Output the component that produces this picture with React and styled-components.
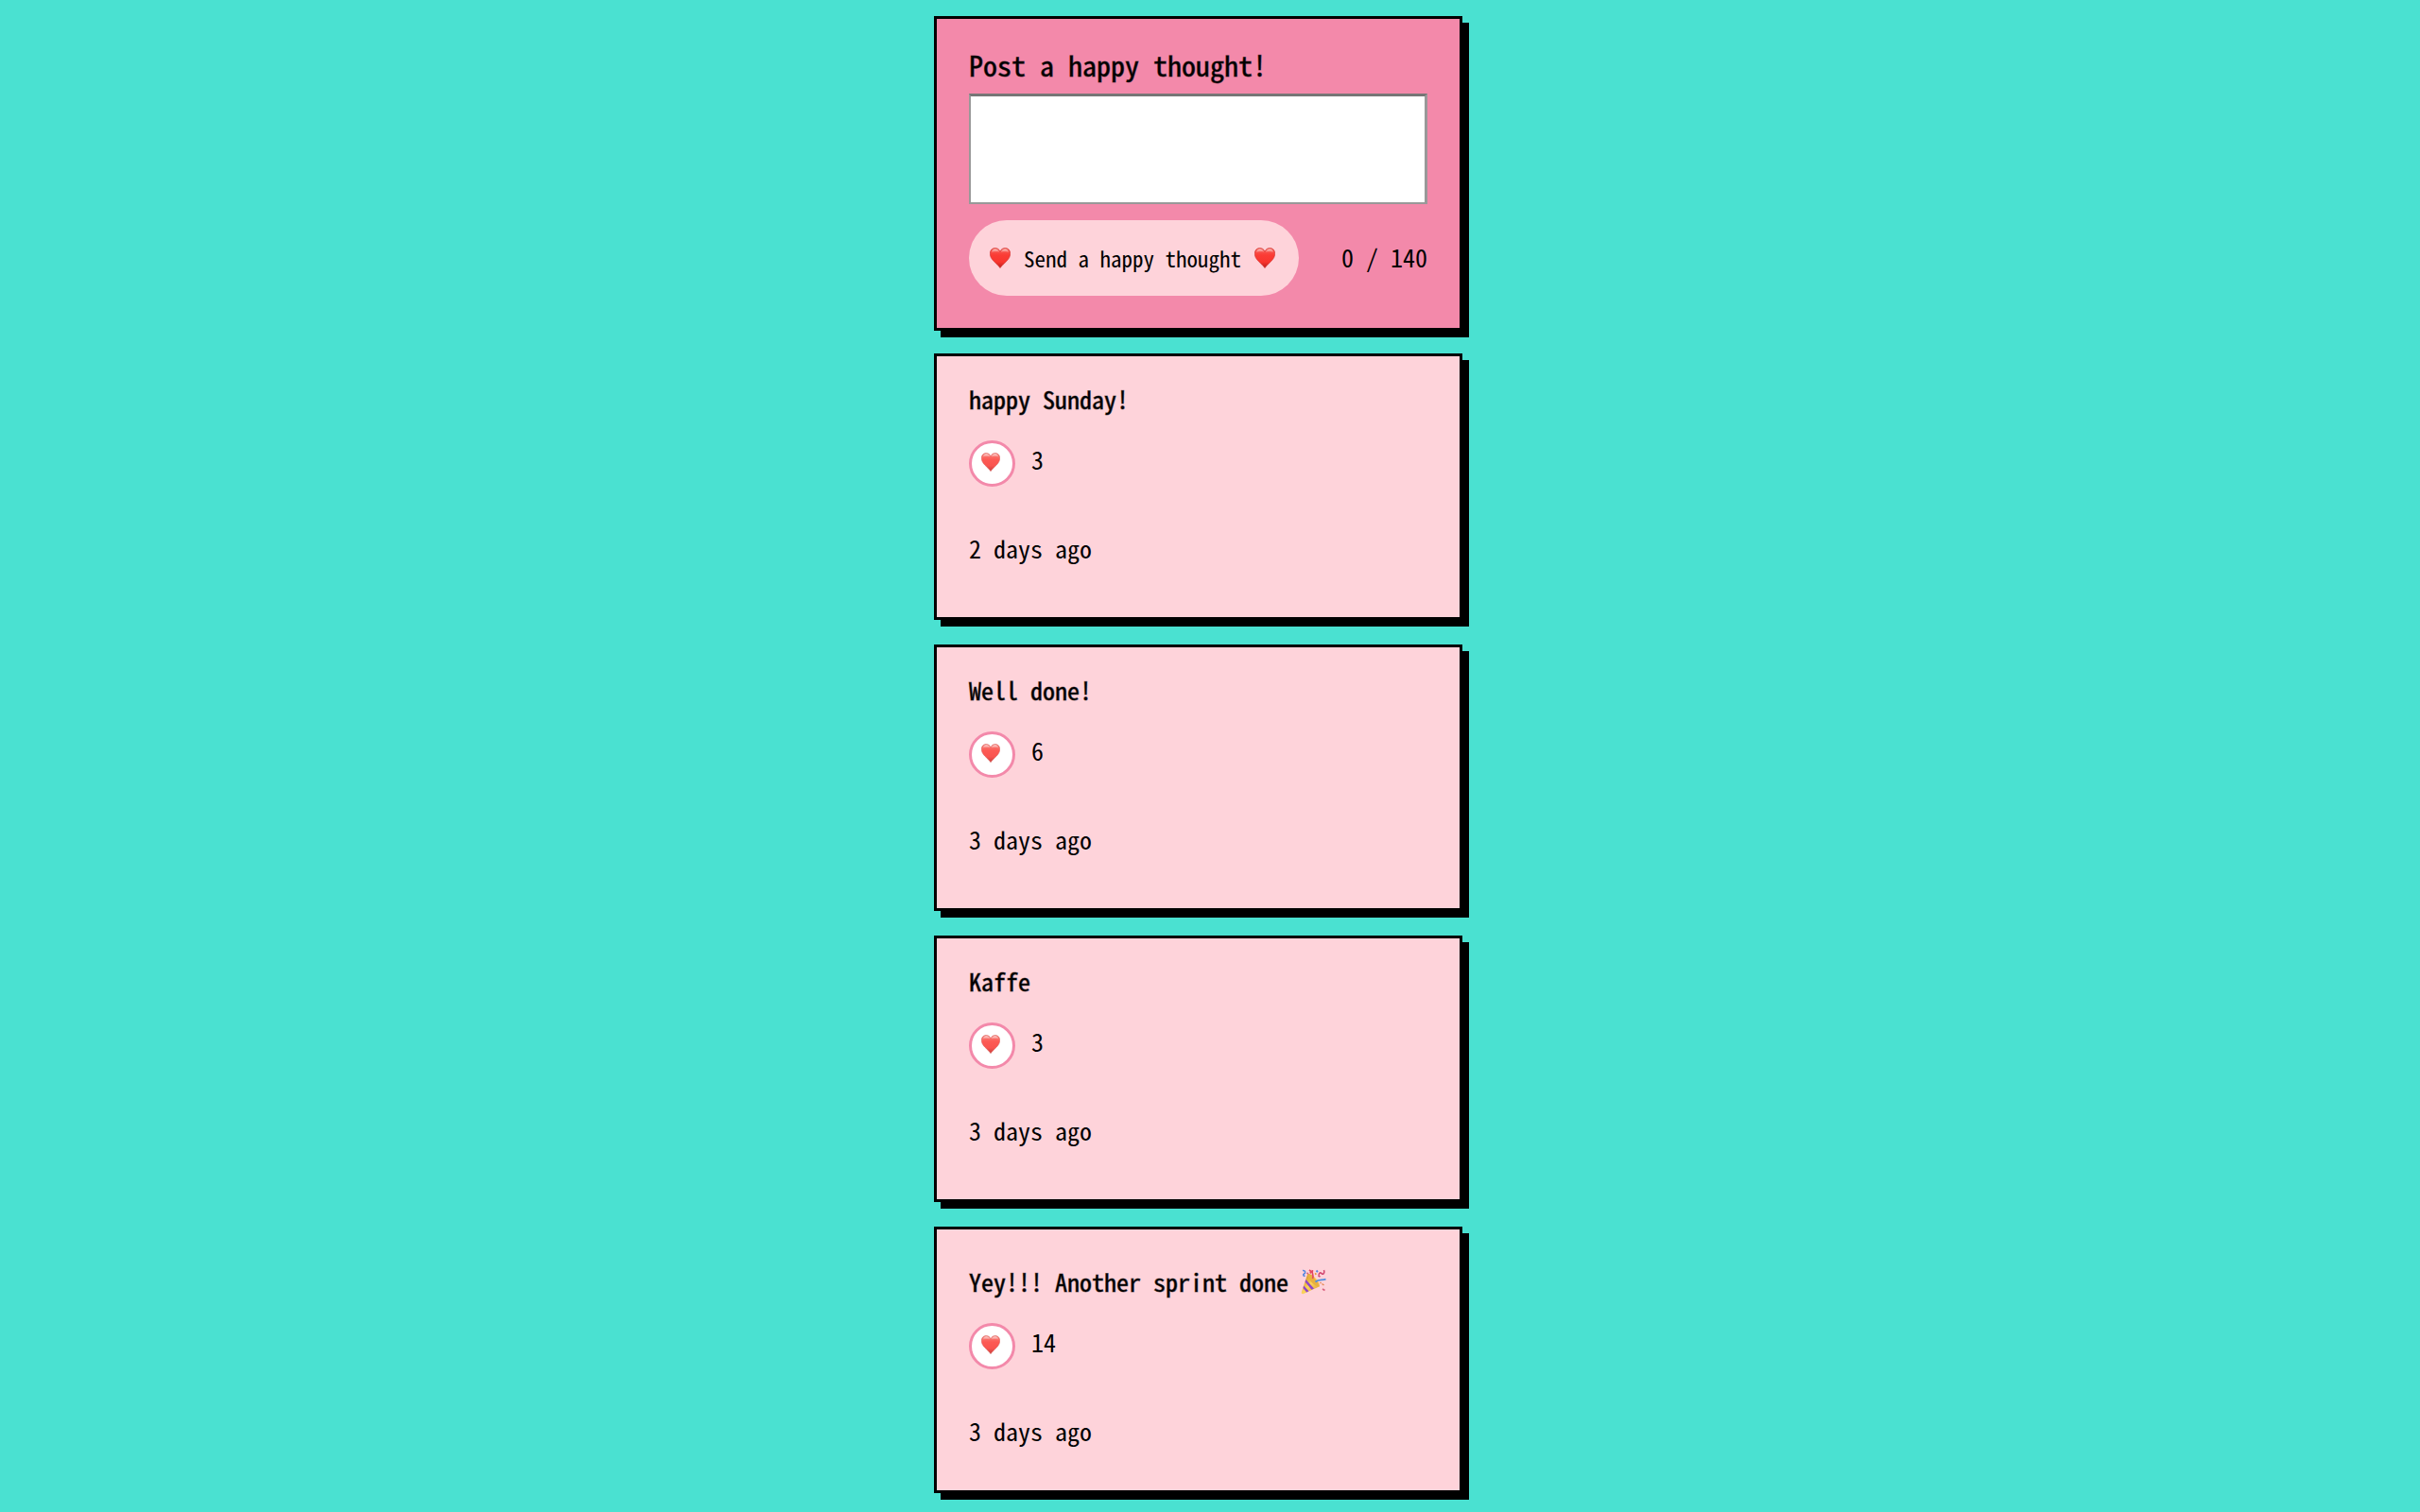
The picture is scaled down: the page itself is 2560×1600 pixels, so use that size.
import React, { useId, useState } from "react";
import styled, { createGlobalStyle } from "styled-components";

const MAX_LENGTH = 140;

const GlobalStyle = createGlobalStyle`
  *, *::before, *::after { box-sizing: border-box; }
  body {
    margin: 0;
    background: #4ae1d1;
    color: #000;
    font-family: "Noto Sans Mono CJK JP", "DejaVu Sans Mono", monospace;
    font-size: 26px;
    line-height: 22px;
  }
`;

const Shell = styled.div`
  display: flex;
  justify-content: center;
  padding-right: 25px;
`;

const Page = styled.main`
  width: 100%;
  max-width: 559px;
  padding: 17px 0 14px;
`;

const Card = styled.div`
  border: 3px solid #000;
  box-shadow: 7px 7px 0 #000;
  padding: 34px;
`;

const ThoughtForm = styled(Card)`
  display: flex;
  flex-direction: column;
  margin-bottom: 24px;
  background: #f389aa;
`;

const FormTitle = styled.label`
  padding-bottom: 17px;
  font-size: 30px;
  line-height: 28px;
  -webkit-text-stroke: 1px rgba(0, 0, 0, 0.5);
`;

const MessageBox = styled.textarea`
  height: 117px;
  margin: 0 0 17px;
  padding: 8px;
  border: solid #999;
  border-width: 3px 3px 2px 2px;
  border-top-color: #767676;
  border-radius: 0;
  background: #fff;
  font: inherit;
  line-height: 32px;
  resize: none;
  outline: none;
`;

const FormFooter = styled.div`
  display: flex;
  align-items: center;
  justify-content: space-between;
`;

const SendButton = styled.button`
  display: flex;
  align-items: center;
  gap: 14px;
  height: 80px;
  padding: 0 25px 0 22px;
  border: 0;
  border-radius: 40px;
  background: #fed3da;
  color: #000;
  font-family: inherit;
  font-size: 23px;
  cursor: pointer;
`;

const Counter = styled.span`
  padding-bottom: 3px;
  white-space: nowrap;
`;

const ThoughtList = styled.div`
  display: flex;
  flex-direction: column;
  gap: 26px;
`;

const ThoughtCard = styled(Card).attrs({ as: "article" })`
  min-height: 282px;
  background: #fed3da;
`;

const Message = styled.h2`
  margin: 0 0 33px;
  font-size: 26px;
  font-weight: 400;
  -webkit-text-stroke: 1px rgba(0, 0, 0, 0.5);
`;

const Likes = styled.div`
  display: flex;
  align-items: center;
  gap: 17px;
`;

const LikeButton = styled.button`
  display: grid;
  place-items: center;
  width: 49px;
  height: 49px;
  padding: 0 3px 3px 0;
  border: 3px solid #f389aa;
  border-radius: 50%;
  background: #fff;
  cursor: pointer;
`;

const LikeCount = styled.span`
  padding-bottom: 10px;
`;

const PostedAt = styled.p`
  margin: 54px 0 0;
`;

const PopperIcon = styled.svg`
  width: 27px;
  height: 27px;
  margin: 8px 0 -4px;
  vertical-align: 1px;
`;

function Heart({ size = 22, soft = false }) {
  const id = useId();
  return (
    <svg width={size} height={size} viewBox="0 0 22 22" aria-hidden="true">
      <defs>
        <linearGradient id={id + "f"} x1="0" y1="0" x2="0" y2="1">
          <stop offset="0" stopColor={soft ? "#f5837c" : "#f4655d"} />
          <stop offset="0.35" stopColor={soft ? "#fd5a54" : "#fb3c35"} />
          <stop offset="0.7" stopColor={soft ? "#f9544f" : "#f8352e"} />
          <stop offset="1" stopColor={soft ? "#c93f3c" : "#b81f1d"} />
        </linearGradient>
        <linearGradient id={id + "g"} x1="0" y1="0" x2="0" y2="1">
          <stop offset="0" stopColor="#fff" stopOpacity="0.65" />
          <stop offset="1" stopColor="#fff" stopOpacity="0" />
        </linearGradient>
      </defs>
      <path
        d="M11 21.600C9.600 19.500 7 17.200 4.300 14.500C1.700 11.900 0.300 9.300 0.300 6.300C0.300 2.900 2.500 0.500 5.700 0.500C8.100 0.500 10 1.800 11 4.100C12 1.800 13.900 0.500 16.300 0.500C19.500 0.500 21.700 2.900 21.700 6.300C21.700 9.300 20.300 11.900 17.700 14.500C15 17.200 12.400 19.500 11 21.600Z"
        fill={`url(#${id}f)`}
        stroke={soft ? "#d9615d" : "#cf2f2b"}
        strokeWidth="0.6"
      />
      <path
        d="M1.800 5.600C2 3 3.600 1.500 5.800 1.500C8 1.500 9.600 2.800 10.400 5C8.500 4.200 4 4 1.800 5.600Z"
        fill={`url(#${id}g)`}
      />
      <path
        d="M20.200 5.600C20 3 18.400 1.500 16.200 1.500C14 1.500 12.400 2.800 11.600 5C13.500 4.200 18 4 20.200 5.600Z"
        fill={`url(#${id}g)`}
      />
    </svg>
  );
}

function PartyPopper() {
  const id = useId();
  return (
    <PopperIcon viewBox="0 0 27 27" role="img" aria-label="party popper">
      <defs>
        <linearGradient id={id} x1="0" y1="0" x2="1" y2="1">
          <stop offset="0.2" stopColor="#d89a2d" />
          <stop offset="0.5" stopColor="#fbd45a" />
          <stop offset="1" stopColor="#d9952c" />
        </linearGradient>
      </defs>
      <path d="M0.800 24.500L7.200 5.200C10.500 4 19.500 11 20 18.200L3 26C1.500 26.600 0.400 26 0.800 24.500Z" fill={`url(#${id})`} />
      <ellipse cx="13" cy="11.700" rx="2.600" ry="8.200" transform="rotate(-42 13 11.700)" fill="#e8b040" />
      <path d="M5.400 11L14 20.500L11.500 21.800L4.600 13.500Z" fill="#8f45c9" />
      <path d="M3.200 17.500L8.500 23.200L6.200 24.400L2.500 20Z" fill="#8f45c9" />
      <path d="M2 1.500C5 1 5.500 4 3.500 5C2 6 3 7.500 4.500 7" fill="none" stroke="#5686df" strokeWidth="1.600" />
      <path d="M9 1L11 2.500L10 4.500M12.500 10C14.500 7 11 5 12.500 1" fill="none" stroke="#e4475f" strokeWidth="1.700" />
      <path d="M15.500 13.500C18.500 10.500 22 12 26.500 10.600" fill="none" stroke="#4f8ee0" strokeWidth="1.900" />
      <path d="M19 6.500C19.500 3 21.500 3.500 22.500 5C24 6 25.500 3.500 24.500 1M18.500 7L20.500 8" fill="none" stroke="#d34b73" strokeWidth="1.600" />
      <path d="M16.500 1.500L18 3" stroke="#5686df" strokeWidth="1.800" />
      <path d="M15.500 4L16 6" stroke="#e5a33d" strokeWidth="1.500" />
      <path d="M22.500 15.500L24.500 17M20.500 14L21.500 15" stroke="#e58a55" strokeWidth="1.500" />
      <path d="M23 21L25.500 22.500M6.500 4L8 5" stroke="#d8607f" strokeWidth="1.700" />
    </PopperIcon>
  );
}

const initialThoughts = [
  { id: 1, message: "happy Sunday!", likes: 3, posted: "2 days ago" },
  { id: 2, message: "Well done!", likes: 6, posted: "3 days ago" },
  { id: 3, message: "Kaffe", likes: 3, posted: "3 days ago" },
  { id: 4, message: "Yey!!! Another sprint done", party: true, likes: 14, posted: "3 days ago" },
];

export default function App() {
  const [text, setText] = useState("");
  const [thoughts, setThoughts] = useState(initialThoughts);

  const send = (event) => {
    event.preventDefault();
    if (!text.trim()) return;
    setThoughts([{ id: Date.now(), message: text, likes: 0, posted: "just now" }, ...thoughts]);
    setText("");
  };

  const like = (id) =>
    setThoughts(thoughts.map((t) => (t.id === id ? { ...t, likes: t.likes + 1 } : t)));

  return (
    <Shell>
      <GlobalStyle />
      <Page>
        <ThoughtForm as="form" onSubmit={send}>
          <FormTitle htmlFor="thought">Post a happy thought!</FormTitle>
          <MessageBox
            id="thought"
            maxLength={MAX_LENGTH}
            value={text}
            onChange={(event) => setText(event.target.value)}
          />
          <FormFooter>
            <SendButton type="submit">
              <Heart />
              Send a happy thought
              <Heart />
            </SendButton>
            <Counter>{text.length} / {MAX_LENGTH}</Counter>
          </FormFooter>
        </ThoughtForm>
        <ThoughtList>
          {thoughts.map((t) => (
            <ThoughtCard key={t.id}>
              <Message>
                {t.message}
                {t.party && <> <PartyPopper /></>}
              </Message>
              <Likes>
                <LikeButton type="button" aria-label={`Like ${t.message}`} onClick={() => like(t.id)}>
                  <Heart size={20} soft />
                </LikeButton>
                <LikeCount>{t.likes}</LikeCount>
              </Likes>
              <PostedAt>{t.posted}</PostedAt>
            </ThoughtCard>
          ))}
        </ThoughtList>
      </Page>
    </Shell>
  );
}
